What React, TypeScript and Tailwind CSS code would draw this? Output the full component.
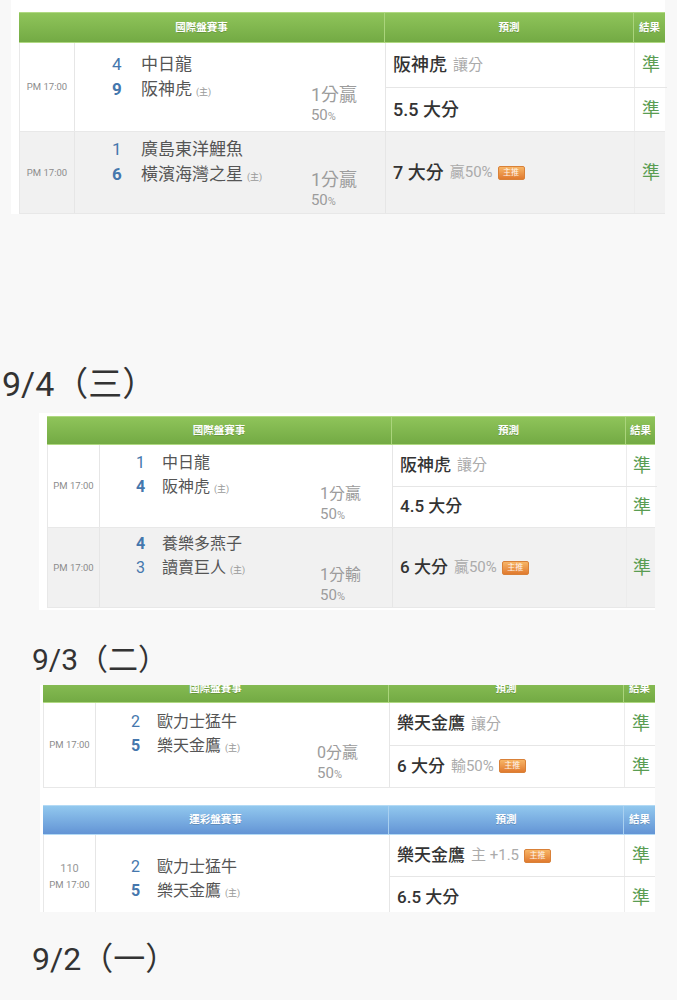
type Team = { no: string; name: string; bold?: boolean; host?: boolean };
type Pred = { main: string; note?: string; badge?: boolean };
type Game = {
  time: string[];
  teams: Team[];
  line?: [string, string];
  preds: Pred[];
  shade?: boolean;
  h: string;
};
type Cols = {
  time: string;
  match: string;
  pred: string;
  result: string;
  head: string;
  padL: string;
  padR: string;
};

const wide: Cols = {
  time: 'w-[55px]',
  match: 'w-[310px]',
  pred: 'w-[249px]',
  result: 'w-[32px]',
  head: 'w-[365px]',
  padL: 'pl-[37px]',
  padR: 'pr-[28px]',
};

const mid: Cols = {
  time: 'w-[52px]',
  match: 'w-[292px]',
  pred: 'w-[234px]',
  result: 'w-[30px]',
  head: 'w-[344px]',
  padL: 'pl-[36px]',
  padR: 'pr-[31px]',
};

const narrow: Cols = {
  time: 'w-[52px]',
  match: 'w-[293px]',
  pred: 'w-[235px]',
  result: 'w-[32px]',
  head: 'w-[345px]',
  padL: 'pl-[35px]',
  padR: 'pr-[31px]',
};

function Badge() {
  return (
    <span className="ml-[5px] inline-flex h-[14px] w-[27px] items-center justify-center rounded-[2px] border border-[#d98138] bg-gradient-to-b from-[#f7b566] to-[#e07a2e] text-[8px] leading-none text-white/90">
      主推
    </span>
  );
}

function Header({
  cols,
  title,
  blue,
  h,
}: {
  cols: Cols;
  title: string;
  blue?: boolean;
  h: string;
}) {
  const tone = blue
    ? 'from-[#92c8ee] to-[#6394d5] border-[#b3daf5]'
    : 'from-[#8fc45a] to-[#73aa44] border-[#b0d982]';
  const line = blue ? 'border-[#a9d0f0]' : 'border-[#aad47c]';
  return (
    <div
      className={`flex ${h} border-t border-b bg-gradient-to-b ${tone} text-[10.5px] font-bold text-white [text-shadow:0_1px_0_rgba(0,0,0,0.18)]`}
    >
      <div className={`${cols.head} flex items-center justify-center`}>{title}</div>
      <div className={`${cols.pred} flex items-center justify-center border-l ${line}`}>
        預測
      </div>
      <div className={`${cols.result} flex items-center justify-center border-l ${line}`}>
        結果
      </div>
    </div>
  );
}

function Row({ cols, game, big }: { cols: Cols; game: Game; big?: boolean }) {
  const nameSize = big
    ? 'text-[17px] leading-[25px] h-[25px]'
    : 'text-[16px] leading-[24px] h-[24px]';
  const numWidth = big ? 'w-[29px]' : 'w-[26px]';
  const predSize = big ? 'text-[18px]' : 'text-[17px]';
  const lineSize = big ? 'text-[18px]' : 'text-[16px]';
  return (
    <div
      className={`flex ${game.h} border-b border-l border-[#e8e8e8] ${
        game.shade ? 'bg-[#f1f1f1]' : 'bg-white'
      }`}
    >
      <div
        className={`${cols.time} flex shrink-0 flex-col items-center justify-center gap-[6px] border-r border-[#e6e6e6] text-[9.5px] leading-none text-[#8c8c8c]`}
      >
        {game.time.map((t) => (
          <span key={t} className={t === '110' ? 'text-[11px] text-[#999]' : ''}>
            {t}
          </span>
        ))}
      </div>
      <div
        className={`${cols.match} ${cols.padL} ${cols.padR} flex shrink-0 items-center pt-[4px]`}
      >
        <div className="flex w-full">
          <div className="flex flex-col">
            {game.teams.map((t) => (
              <div key={t.name} className={`flex items-baseline ${nameSize}`}>
                <span className={`${numWidth} text-[#4577ad] ${t.bold ? 'font-bold' : ''}`}>
                  {t.no}
                </span>
                <span className="text-[#555]">{t.name}</span>
                {t.host && <span className="ml-[4px] text-[9px] text-[#999]">(主)</span>}
              </div>
            ))}
          </div>
          {game.line && (
            <div className="ml-auto flex flex-col pt-[32px] text-[#9c9c9c]">
              <span className={`${lineSize} leading-[21px]`}>{game.line[0]}</span>
              <span className="text-[15px] leading-[20px]">
                {game.line[1]}
                <span className="text-[11px]">%</span>
              </span>
            </div>
          )}
        </div>
      </div>
      <div className="flex flex-col border-l border-[#e6e6e6]">
        {game.preds.map((p, i) => (
          <div
            key={p.main}
            className={`flex flex-1 ${i > 0 ? 'border-t border-[#e6e6e6]' : ''}`}
          >
            <div
              className={`${cols.pred} flex items-center border-r border-[#ececec] pl-[7px]`}
            >
              <span className={`${predSize} font-medium text-[#333]`}>{p.main}</span>
              {p.note && (
                <span className="ml-[6px] text-[15px] text-[#ababab]">{p.note}</span>
              )}
              {p.badge && <Badge />}
            </div>
            <div
              className={`${cols.result} flex items-center justify-center text-[18px] text-[#5a9d52]`}
            >
              準
            </div>
          </div>
        ))}
      </div>
    </div>
  );
}

function DateTitle({ text, cls }: { text: string; cls: string }) {
  return <div className={`${cls} text-[#333]`}>{text}</div>;
}

const first: Game[] = [
  {
    time: ['PM 17:00'],
    teams: [
      { no: '4', name: '中日龍' },
      { no: '9', name: '阪神虎', bold: true, host: true },
    ],
    line: ['1分贏', '50'],
    preds: [{ main: '阪神虎', note: '讓分' }, { main: '5.5 大分' }],
    h: 'h-[89px]',
  },
  {
    time: ['PM 17:00'],
    teams: [
      { no: '1', name: '廣島東洋鯉魚' },
      { no: '6', name: '橫濱海灣之星', bold: true, host: true },
    ],
    line: ['1分贏', '50'],
    preds: [{ main: '7 大分', note: '贏50%', badge: true }],
    shade: true,
    h: 'h-[82px]',
  },
];

const second: Game[] = [
  {
    time: ['PM 17:00'],
    teams: [
      { no: '1', name: '中日龍' },
      { no: '4', name: '阪神虎', bold: true, host: true },
    ],
    line: ['1分贏', '50'],
    preds: [{ main: '阪神虎', note: '讓分' }, { main: '4.5 大分' }],
    h: 'h-[83px]',
  },
  {
    time: ['PM 17:00'],
    teams: [
      { no: '4', name: '養樂多燕子', bold: true },
      { no: '3', name: '讀賣巨人', host: true },
    ],
    line: ['1分輸', '50'],
    preds: [{ main: '6 大分', note: '贏50%', badge: true }],
    shade: true,
    h: 'h-[80px]',
  },
];

const third: Game = {
  time: ['PM 17:00'],
  teams: [
    { no: '2', name: '歐力士猛牛' },
    { no: '5', name: '樂天金鷹', bold: true, host: true },
  ],
  line: ['0分贏', '50'],
  preds: [{ main: '樂天金鷹', note: '讓分' }, { main: '6 大分', note: '輸50%', badge: true }],
  h: 'h-[85px]',
};

const fourth: Game = {
  time: ['110', 'PM 17:00'],
  teams: [
    { no: '2', name: '歐力士猛牛' },
    { no: '5', name: '樂天金鷹', bold: true, host: true },
  ],
  preds: [{ main: '樂天金鷹', note: '主 +1.5', badge: true }, { main: '6.5 大分' }],
  h: 'h-[84px]',
};

export default function App() {
  return (
    <div className="h-[1000px] w-[677px] overflow-hidden bg-[#f8f8f8] font-[family-name:Roboto,'Noto_Sans_CJK_TC',sans-serif]">
      <div className="ml-[11px] w-[654px] bg-white pl-[8px] pt-[12px]">
        <Header cols={wide} title="國際盤賽事" h="h-[31px]" />
        {first.map((g) => (
          <Row key={g.teams[0].name} cols={wide} game={g} big />
        ))}
      </div>

      <DateTitle
        text="9/4（三）"
        cls="mt-[150px] ml-[2px] h-[40px] text-[34px] leading-[40px]"
      />

      <div className="mt-[9px] ml-[39px] w-[616px] bg-white pb-[2px] pl-[8px] pt-[3px]">
        <Header cols={mid} title="國際盤賽事" h="h-[29px]" />
        {second.map((g) => (
          <Row key={g.teams[0].name} cols={mid} game={g} />
        ))}
      </div>

      <DateTitle
        text="9/3（二）"
        cls="mt-[32px] ml-[32px] h-[36px] text-[30px] leading-[36px]"
      />

      <div className="mt-[7px] ml-[40px] h-[227px] w-[615px] overflow-hidden bg-white pl-[3px]">
        <div className="-mt-[11px]">
          <Header cols={narrow} title="國際盤賽事" h="h-[29px]" />
        </div>
        <Row cols={narrow} game={third} />
        <div className="h-[17px] bg-white" />
        <Header cols={narrow} title="運彩盤賽事" blue h="h-[30px]" />
        <Row cols={narrow} game={fourth} />
      </div>

      <DateTitle
        text="9/2（一）"
        cls="mt-[28px] ml-[32px] h-[38px] text-[32px] leading-[38px]"
      />
    </div>
  );
}
